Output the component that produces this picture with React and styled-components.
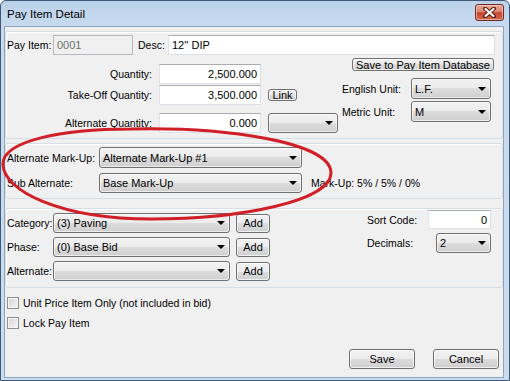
import React from "react";
import styled, { createGlobalStyle } from "styled-components";

const Global = createGlobalStyle`
  html, body { margin: 0; padding: 0; background: #ffffff; }
  body { font-family: "Liberation Sans", Arial, sans-serif; font-size: 10.5px; color: #000; }
  #root { width: 510px; height: 381px; }
  * { box-sizing: border-box; }
`;

const Window = styled.div`
  position: relative;
  width: 510px;
  height: 381px;
  border: 1px solid #3f5873;
  border-radius: 6px 6px 0 0;
  background: linear-gradient(#bcd2ea, #c7daef 24px, #c9dcf0);
  display: flex;
  flex-direction: column;
  overflow: hidden;
`;

const TitleBar = styled.div`
  height: 25px;
  flex: none;
  display: flex;
  align-items: flex-start;
  padding-left: 6px;
`;

const Title = styled.span`
  line-height: 26px;
  font-size: 11.5px;
  color: #000;
`;

const CloseBtn = styled.div`
  margin-left: auto;
  margin-top: 3px;
  margin-right: 5px;
  width: 29px;
  height: 17px;
  border: 1px solid #6e2b22;
  border-radius: 3px;
  background: linear-gradient(#eba999, #d9826f 45%, #c6432c 52%, #d46a4f);
  box-shadow: inset 0 0 0 1px rgba(255, 220, 210, 0.55);
  display: flex;
  align-items: center;
  justify-content: center;
`;

const Client = styled.div`
  flex: 1;
  margin: 0 5px 2px 3px;
  border: 1px solid #8fa5bd;
  background: #f0f0f0;
  display: flex;
  flex-direction: column;
`;

const Group = styled.div`
  height: ${(p) => p.$h}px;
  margin-top: ${(p) => p.$mt}px;
  border: 1px solid #d5dfe5;
  border-radius: 3px;
  box-shadow: inset 1px 1px 0 #ffffff;
  display: flex;
  flex-direction: ${(p) => (p.$row ? "row" : "column")};
  padding-top: ${(p) => p.$pt || 0}px;
`;

const Row = styled.div`
  display: flex;
  align-items: center;
  margin-top: ${(p) => p.$mt || 0}px;
  height: ${(p) => p.$h || 20}px;
`;

const Label = styled.span`
  flex: none;
  width: ${(p) => p.$w}px;
  margin-left: ${(p) => p.$ml || 0}px;
  text-align: ${(p) => p.$align || "left"};
  white-space: nowrap;
`;

const Field = styled.div`
  flex: none;
  width: ${(p) => p.$w}px;
  height: ${(p) => p.$h || 20}px;
  border: 1px solid #dbdfe6;
  border-top-color: #abadb3;
  border-left-color: #e2e3ea;
  background: ${(p) => (p.$disabled ? "#f0f0f0" : "#ffffff")};
  color: ${(p) => (p.$disabled ? "#6d6d6d" : "#000")};
  display: flex;
  align-items: center;
  justify-content: ${(p) => (p.$right ? "flex-end" : "flex-start")};
  padding: 0 3px;
  white-space: nowrap;
  font-size: 11px;
  ${(p) => (p.$disabled ? "border-color: #b5b8bc;" : "")}
`;

const Combo = styled.div`
  position: relative;
  flex: none;
  width: ${(p) => p.$w}px;
  height: ${(p) => p.$h || 20}px;
  border: 1px solid #707070;
  border-radius: 3px;
  background: linear-gradient(#f2f2f2, #ebebeb 50%, #dddddd 50%, #cfcfcf);
  box-shadow: inset 0 0 0 1px rgba(255, 255, 255, 0.6);
  display: flex;
  align-items: center;
  padding-left: 3px;
  white-space: nowrap;
  font-size: 11px;
  &::after {
    content: "";
    position: absolute;
    right: 4px;
    top: 50%;
    margin-top: -2px;
    border-left: 4px solid transparent;
    border-right: 4px solid transparent;
    border-top: 4px solid #000;
  }
`;

const Button = styled.div`
  flex: none;
  width: ${(p) => p.$w}px;
  height: ${(p) => p.$h || 20}px;
  margin-left: ${(p) => p.$ml || 0}px;
  align-self: ${(p) => p.$self || "auto"};
  border: 1px solid #707070;
  border-radius: 3px;
  background: linear-gradient(#f2f2f2, #ebebeb 50%, #dddddd 50%, #cfcfcf);
  box-shadow: inset 0 0 0 1px rgba(255, 255, 255, 0.7);
  display: flex;
  align-items: center;
  justify-content: center;
  line-height: 10px;
  white-space: nowrap;
  overflow: hidden;
  font-size: 11px;
`;

const TopRow = styled.div`
  display: flex;
  align-items: flex-start;
  margin-top: 3px;
`;

const QtyCol = styled.div`
  display: flex;
  flex-direction: column;
  margin-top: 6px;
`;

const QtyRow = styled.div`
  display: grid;
  grid-template-columns: 146px 102px auto;
  column-gap: 7px;
  align-items: center;
  height: 20px;
  margin-top: ${(p) => p.$mt || 0}px;
`;

const UnitCol = styled.div`
  display: flex;
  flex-direction: column;
  width: 152px;
  margin-left: 4px;
`;

const ListCol = styled.div`
  display: flex;
  flex-direction: column;
  gap: 4px;
  padding-top: 4px;
`;

const SideCol = styled.div`
  display: flex;
  flex-direction: column;
  margin-left: auto;
  margin-right: 11px;
  padding-top: 1px;
  width: 124px;
`;

const SideRow = styled.div`
  display: flex;
  align-items: center;
  justify-content: space-between;
  height: ${(p) => p.$h}px;
  margin-top: ${(p) => p.$mt || 0}px;
`;

const Note = styled.span`
  margin-left: 9px;
  white-space: nowrap;
`;

const CheckRow = styled.div`
  display: flex;
  align-items: center;
  height: 12px;
  margin-top: ${(p) => p.$mt}px;
  padding-left: 2px;
`;

const Box = styled.span`
  width: 12px;
  height: 12px;
  border: 1px solid #8e8f8f;
  background: linear-gradient(135deg, #d6d6d6, #f6f6f6);
  box-shadow: inset 0 0 0 1px #f4f4f4;
  margin-right: 4px;
`;

const Footer = styled.div`
  margin-top: auto;
  margin-bottom: 8px;
  padding-right: 4px;
  display: flex;
  justify-content: flex-end;
  gap: 18px;
`;

const Overlay = styled.svg`
  position: absolute;
  left: 0;
  top: 0;
  pointer-events: none;
`;

export default function App() {
  return (
    <>
      <Global />
      <Window>
        <TitleBar>
          <Title>Pay Item Detail</Title>
          <CloseBtn>
            <svg width="13" height="11" viewBox="0 0 13 11">
              <path d="M2 1.5 L11 9.5 M11 1.5 L2 9.5" stroke="#5b1d15" strokeWidth="4" strokeLinecap="round" />
              <path d="M2.5 2 L10.5 9 M10.5 2 L2.5 9" stroke="#ffffff" strokeWidth="2.2" strokeLinecap="round" />
            </svg>
          </CloseBtn>
        </TitleBar>
        <Client>
          <Group $h={108} $mt={4} $pt={3}>
            <Row>
              <Label $w={46} $ml={1}>Pay Item:</Label>
              <Field $w={80} $disabled>0001</Field>
              <Label $w={30} $ml={5}>Desc:</Label>
              <Field $w={327}>12'' DIP</Field>
            </Row>
            <TopRow>
              <QtyCol>
                <QtyRow>
                  <Label $w={146} $align="right">Quantity:</Label>
                  <Field $w={102} $right>2,500.000</Field>
                </QtyRow>
                <QtyRow $mt={1}>
                  <Label $w={146} $align="right">Take-Off Quantity:</Label>
                  <Field $w={102} $right>3,500.000</Field>
                  <Button $w={29} $h={12}>Link</Button>
                </QtyRow>
                <QtyRow $mt={8}>
                  <Label $w={146} $align="right">Alternate Quantity:</Label>
                  <Field $w={102} $right>0.000</Field>
                  <Combo $w={70} $h={20} />
                </QtyRow>
              </QtyCol>
              <UnitCol>
                <Button $w={142} $h={13} $self="flex-end">Save to Pay Item Database</Button>
                <Row $mt={7} $h={21}>
                  <Label $w={69}>English Unit:</Label>
                  <Combo $w={80} $h={21}>L.F.</Combo>
                </Row>
                <Row $mt={2} $h={21}>
                  <Label $w={69}>Metric Unit:</Label>
                  <Combo $w={80} $h={21}>M</Combo>
                </Row>
              </UnitCol>
            </TopRow>
          </Group>

          <Group $h={56} $mt={4} $pt={3}>
            <Row $h={21}>
              <Label $w={92} $ml={1}>Alternate Mark-Up:</Label>
              <Combo $w={203} $h={21}>Alternate Mark-Up #1</Combo>
            </Row>
            <Row $mt={5} $h={20}>
              <Label $w={92} $ml={1}>Sub Alternate:</Label>
              <Combo $w={203} $h={20}>Base Mark-Up</Combo>
              <Note>Mark-Up: 5% / 5% / 0%</Note>
            </Row>
          </Group>

          <Group $h={80} $mt={9} $row>
            <ListCol>
              <Row>
                <Label $w={46} $ml={1}>Category:</Label>
                <Combo $w={177}>(3) Paving</Combo>
                <Button $w={34} $h={19} $ml={6}>Add</Button>
              </Row>
              <Row>
                <Label $w={46} $ml={1}>Phase:</Label>
                <Combo $w={177}>(0) Base Bid</Combo>
                <Button $w={34} $h={19} $ml={6}>Add</Button>
              </Row>
              <Row>
                <Label $w={46} $ml={1}>Alternate:</Label>
                <Combo $w={177} />
                <Button $w={34} $h={19} $ml={6}>Add</Button>
              </Row>
            </ListCol>
            <SideCol>
              <SideRow $h={19}>
                <Label $w={60}>Sort Code:</Label>
                <Field $w={63} $h={19} $right>0</Field>
              </SideRow>
              <SideRow $h={20} $mt={4}>
                <Label $w={60}>Decimals:</Label>
                <Combo $w={55} $h={20}>2</Combo>
              </SideRow>
            </SideCol>
          </Group>

          <CheckRow $mt={9}>
            <Box />
            <span>Unit Price Item Only (not included in bid)</span>
          </CheckRow>
          <CheckRow $mt={8}>
            <Box />
            <span>Lock Pay Item</span>
          </CheckRow>

          <Footer>
            <Button $w={66} $h={20}>Save</Button>
            <Button $w={66} $h={20}>Cancel</Button>
          </Footer>
        </Client>
        <Overlay width="510" height="381" viewBox="0 0 510 381">
          <path
            d="M 2,163 C 2,140 60,128 130,128 C 220,126 330,140 330,172 C 330,200 240,218 150,218 C 60,218 2,190 2,163 Z"
            fill="none"
            stroke="#d11f27"
            strokeWidth="3"
          />
        </Overlay>
      </Window>
    </>
  );
}
